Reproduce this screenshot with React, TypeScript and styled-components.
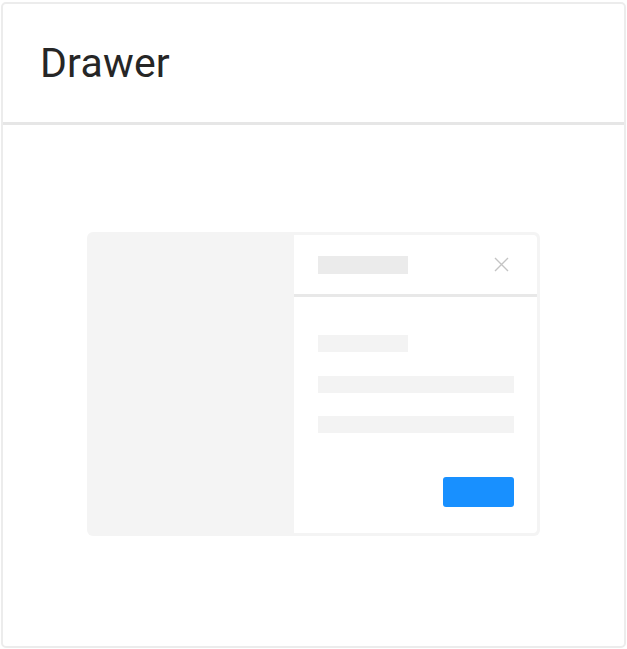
import React from "react";
import styled, { createGlobalStyle } from "styled-components";

const Global = createGlobalStyle`
  html, body { margin: 0; padding: 0; background: #ffffff; }
  body { font-family: Roboto, "Liberation Sans", Arial, sans-serif; }
`;

const Card = styled.div`
  box-sizing: border-box;
  margin: 2px 0 0 1px;
  width: 625px;
  height: 646px;
  border: 2px solid #ececec;
  border-radius: 5px;
  display: flex;
  flex-direction: column;
  background: #fff;
`;

const Header = styled.div`
  flex-shrink: 0;
  height: 118px;
  border-bottom: 3px solid #e6e6e6;
  display: flex;
  align-items: center;
  padding-left: 37px;
`;

const Title = styled.h1`
  margin: 0;
  font-size: 41px;
  font-weight: 400;
  color: #262626;
  letter-spacing: 0.2px;
`;

const Body = styled.div`
  flex: 1;
  display: flex;
  align-items: center;
  justify-content: center;
  padding-bottom: 3px;
`;

const Illustration = styled.div`
  width: 453px;
  height: 304px;
  box-sizing: border-box;
  background: #f4f4f4;
  border-radius: 6px;
  padding: 3px 3px 3px 207px;
  display: flex;
`;

const Panel = styled.div`
  flex: 1;
  background: #fff;
  border-radius: 0 4px 4px 0;
  display: flex;
  flex-direction: column;
`;

const PanelHeader = styled.div`
  flex-shrink: 0;
  height: 59px;
  border-bottom: 3px solid #e8e8e8;
  display: flex;
  align-items: center;
  justify-content: space-between;
  padding: 0 28px 0 24px;
`;

const Bar = styled.div<{ $w: number; $h?: number; $c?: string; $mt?: number }>`
  flex-shrink: 0;
  width: ${(p) => p.$w}px;
  height: ${(p) => p.$h ?? 17}px;
  margin-top: ${(p) => p.$mt ?? 0}px;
  background: ${(p) => p.$c ?? "#f3f3f3"};
`;

const PanelBody = styled.div`
  flex: 1;
  min-height: 0;
  display: flex;
  flex-direction: column;
  padding: 38px 23px 26px 24px;
`;

const Button = styled.div`
  margin-top: auto;
  align-self: flex-end;
  width: 71px;
  height: 30px;
  border-radius: 3px;
  background: #1890ff;
`;

const CloseIcon = () => (
  <svg width="15" height="15" viewBox="0 0 15 15">
    <path d="M1 1 L14 14 M14 1 L1 14" stroke="#c4c4c4" strokeWidth="1.4" fill="none" />
  </svg>
);

export default function App() {
  return (
    <>
      <Global />
      <Card>
        <Header>
          <Title>Drawer</Title>
        </Header>
        <Body>
          <Illustration>
            <Panel>
              <PanelHeader>
                <Bar $w={90} $h={18} $c="#ebebeb" />
                <CloseIcon />
              </PanelHeader>
              <PanelBody>
                <Bar $w={90} />
                <Bar $w={196} $mt={24} />
                <Bar $w={196} $mt={23} />
                <Button />
              </PanelBody>
            </Panel>
          </Illustration>
        </Body>
      </Card>
    </>
  );
}
